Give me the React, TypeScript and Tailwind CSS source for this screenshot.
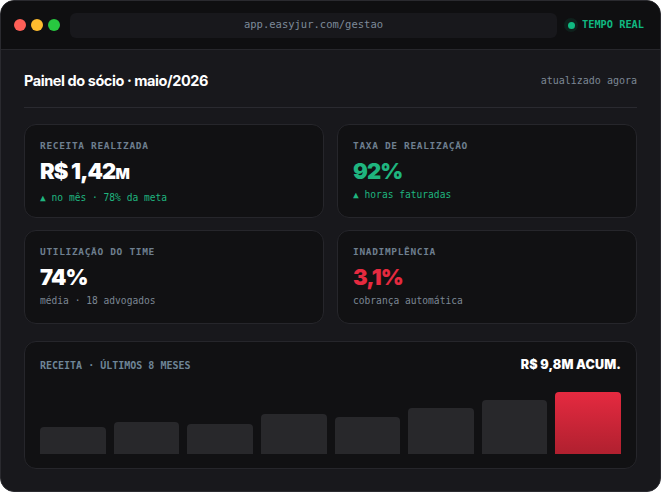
import React from 'react';

const MONO = { fontFamily: '"DejaVu Sans Mono", "Liberation Mono", monospace' };
const HEAD = { fontFamily: 'Inter, "Noto Sans", sans-serif' };

type Kpi = {
  label: string;
  value: React.ReactNode;
  valueClass: string;
  note: string;
  noteClass: string;
};

const kpis: Kpi[] = [
  {
    label: 'RECEITA REALIZADA',
    value: (
      <>
        R$ 1,42<span className="text-[15px]">M</span>
      </>
    ),
    valueClass: 'text-white',
    note: '▲ no mês · 78% da meta',
    noteClass: 'text-[#1fb57f]',
  },
  {
    label: 'TAXA DE REALIZAÇÃO',
    value: '92%',
    valueClass: 'text-[#1fb57f]',
    note: '▲ horas faturadas',
    noteClass: 'text-[#1fb57f]',
  },
  {
    label: 'UTILIZAÇÃO DO TIME',
    value: '74%',
    valueClass: 'text-white',
    note: 'média · 18 advogados',
    noteClass: 'text-[#7c8794]',
  },
  {
    label: 'INADIMPLÊNCIA',
    value: '3,1%',
    valueClass: 'text-[#e52a3f]',
    note: 'cobrança automática',
    noteClass: 'text-[#7c8794]',
  },
];

// altura de cada barra (px) nos últimos 8 meses
const bars = [27, 32, 30, 40, 37, 46, 54, 62];

const KpiCard: React.FC<{ kpi: Kpi }> = ({ kpi }) => (
  <div className="h-[94px] rounded-xl border border-[#26262b] bg-[#111113] px-[15px] pt-[15px]">
    <div style={MONO} className="text-[9.5px] font-bold leading-[12px] tracking-[0.07em] text-[#6e7f8f]">
      {kpi.label}
    </div>
    <div style={HEAD} className={`mt-[5px] text-[22px] font-black leading-[28px] tracking-[-0.04em] ${kpi.valueClass}`}>
      {kpi.value}
    </div>
    <div style={MONO} className={`mt-[3px] text-[9.6px] leading-[13px] ${kpi.noteClass}`}>
      {kpi.note}
    </div>
  </div>
);

export default function App() {
  return (
    <div className="h-[492px] w-[661px] bg-white">
      <div className="flex h-full w-full flex-col overflow-hidden rounded-[14px] border border-[#2a2a2f] bg-[#18181c]">
        {/* barra da janela */}
        <div className="flex h-[49px] shrink-0 items-center border-b border-[#27272c] bg-[#0f0f11] pl-[13px] pr-[16px]">
          <div className="flex gap-[5px]">
            <span className="h-[12px] w-[12px] rounded-full bg-[#fe5f57]" />
            <span className="h-[12px] w-[12px] rounded-full bg-[#febc2e]" />
            <span className="h-[12px] w-[12px] rounded-full bg-[#28c840]" />
          </div>
          <div
            style={MONO}
            className="ml-[10px] flex h-[25px] w-[487px] shrink-0 items-center justify-center rounded-md bg-[#18181c] text-[10.5px] text-[#7d8a99]"
          >
            app.easyjur.com/gestao
          </div>
          <div className="ml-auto flex items-center gap-[4px] whitespace-nowrap">
            <span className="flex h-[14px] w-[14px] items-center justify-center rounded-full bg-[#10b981]/10">
              <span className="h-[7px] w-[7px] rounded-full bg-[#10b981]" />
            </span>
            <span style={MONO} className="text-[10.3px] font-bold text-[#10b981]">
              TEMPO REAL
            </span>
          </div>
        </div>

        <div className="flex flex-1 flex-col px-[23px]">
          <div className="flex h-[58px] items-center justify-between border-b border-[#2a2a30] pt-[4px]">
            <h1 style={HEAD} className="text-[14.5px] font-bold tracking-[-0.03em] text-white">
              Painel do sócio · maio/2026
            </h1>
            <span style={MONO} className="text-[10px] text-[#7c8794]">
              atualizado agora
            </span>
          </div>

          <div className="mt-[16px] grid grid-cols-2 gap-x-[13px] gap-y-[12px]">
            {kpis.map((k) => (
              <KpiCard key={k.label} kpi={k} />
            ))}
          </div>

          <div className="mt-[17px] h-[128px] rounded-xl border border-[#26262b] bg-[#111113] px-[15px] pt-[14px]">
            <div className="flex items-center justify-between">
              <span style={MONO} className="text-[10px] font-bold text-[#6e8597]">
                RECEITA · ÚLTIMOS 8 MESES
              </span>
              <span style={HEAD} className="text-[12.5px] font-black tracking-[0.01em] text-white">
                R$ 9,8M ACUM.
              </span>
            </div>
            <div className="mt-[9px] flex h-[70px] items-end gap-[8px]">
              {bars.map((h, i) => (
                <div
                  key={i}
                  style={{ height: h }}
                  className={
                    i === bars.length - 1
                      ? 'flex-1 rounded-t-[4px] bg-gradient-to-b from-[#e52a40] to-[#b0202f]'
                      : 'flex-1 rounded-t-[4px] bg-[#28282b]'
                  }
                />
              ))}
            </div>
          </div>
        </div>
      </div>
    </div>
  );
}
